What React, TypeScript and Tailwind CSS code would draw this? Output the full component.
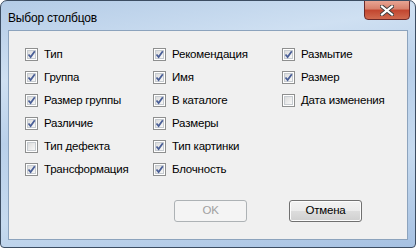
const columns = [
  [
    { label: 'Тип', checked: true },
    { label: 'Группа', checked: true },
    { label: 'Размер группы', checked: true },
    { label: 'Различие', checked: true },
    { label: 'Тип дефекта', checked: false },
    { label: 'Трансформация', checked: true },
  ],
  [
    { label: 'Рекомендация', checked: true },
    { label: 'Имя', checked: true },
    { label: 'В каталоге', checked: true },
    { label: 'Размеры', checked: true },
    { label: 'Тип картинки', checked: true },
    { label: 'Блочность', checked: true },
  ],
  [
    { label: 'Размытие', checked: true },
    { label: 'Размер', checked: true },
    { label: 'Дата изменения', checked: false },
  ],
]

function Check({ checked }: { checked: boolean }) {
  return (
    <span className="w-[13px] h-[13px] border border-[#8e8f8f] bg-white p-px shrink-0">
      <span className="block w-full h-full border border-[#c6cbd0] bg-[linear-gradient(135deg,#dcdcdc,#f8f8f8)]">
        {checked && (
          <svg width="9" height="9" viewBox="0 0 9 9" className="block -ml-px -mt-px">
            <path d="M1.5 4.5 L3.6 7 L7.8 1.2" fill="none" stroke="#4a5f97" strokeWidth="1.8" />
          </svg>
        )}
      </span>
    </span>
  )
}

export default function App() {
  return (
    <div
      className="w-[416px] h-[248px] flex flex-col rounded-t-[7px] rounded-b-[4px] border border-[#3c4d62] bg-[linear-gradient(170deg,#b3cbe6_0%,#cfe0f2_25%,#b9d0ea_45%,#c6daef_70%,#a6c1e2_100%)] overflow-hidden"
      style={{ fontFamily: '"Liberation Sans", Arial, sans-serif' }}
    >
      {/* Title bar */}
      <div className="h-[29px] flex items-start justify-between shrink-0">
        <span className="pl-[7px] pt-[8px] text-[12px] tracking-[-0.2px] text-black">Выбор столбцов</span>
        <div className="mr-[5px] -mt-px w-[46px] h-[20px] rounded-b-[4px] border border-[#6b2a2a] bg-[linear-gradient(#e8a493_0%,#d7806b_45%,#c2452f_50%,#d06a4f_100%)] flex items-center justify-center">
          <svg width="14" height="11" viewBox="0 0 14 11">
            <path d="M2 1.5 L12 9.5 M12 1.5 L2 9.5" stroke="#3d3d3d" strokeWidth="4" strokeLinecap="square" />
            <path d="M2 1.5 L12 9.5 M12 1.5 L2 9.5" stroke="#ffffff" strokeWidth="2.2" strokeLinecap="square" />
          </svg>
        </div>
      </div>

      {/* Client */}
      <div className="flex-1 mx-[7px] mb-[7px] border border-[#8ca3bd] bg-[#f0f0f0] flex flex-col pl-[16px] pt-[17px] text-[11.5px] tracking-[-0.2px] text-black">
        <div className="grid grid-cols-[128px_129px_1fr]">
          {columns.map((col, ci) => (
            <div key={ci} className="flex flex-col">
              {col.map((item) => (
                <div key={item.label} className="h-[23px] flex items-start gap-[6px]">
                  <Check checked={item.checked} />
                  <span className="leading-[13px]">{item.label}</span>
                </div>
              ))}
            </div>
          ))}
        </div>
        <div className="flex gap-[42px] pl-[149px] mt-[14px]">
          <button className="w-[73px] h-[22px] rounded-[3px] border border-[#adb2b5] bg-[#f4f4f4] text-[#a0a0a0] text-[11.5px]">
            OK
          </button>
          <button className="w-[73px] h-[22px] rounded-[3px] border border-[#707070] bg-[linear-gradient(#f2f2f2_0%,#ebebeb_50%,#dddddd_50%,#cfcfcf_100%)] shadow-[inset_0_0_0_1px_#fcfcfc] text-black text-[11.5px]">
            Отмена
          </button>
        </div>
      </div>
    </div>
  )
}
